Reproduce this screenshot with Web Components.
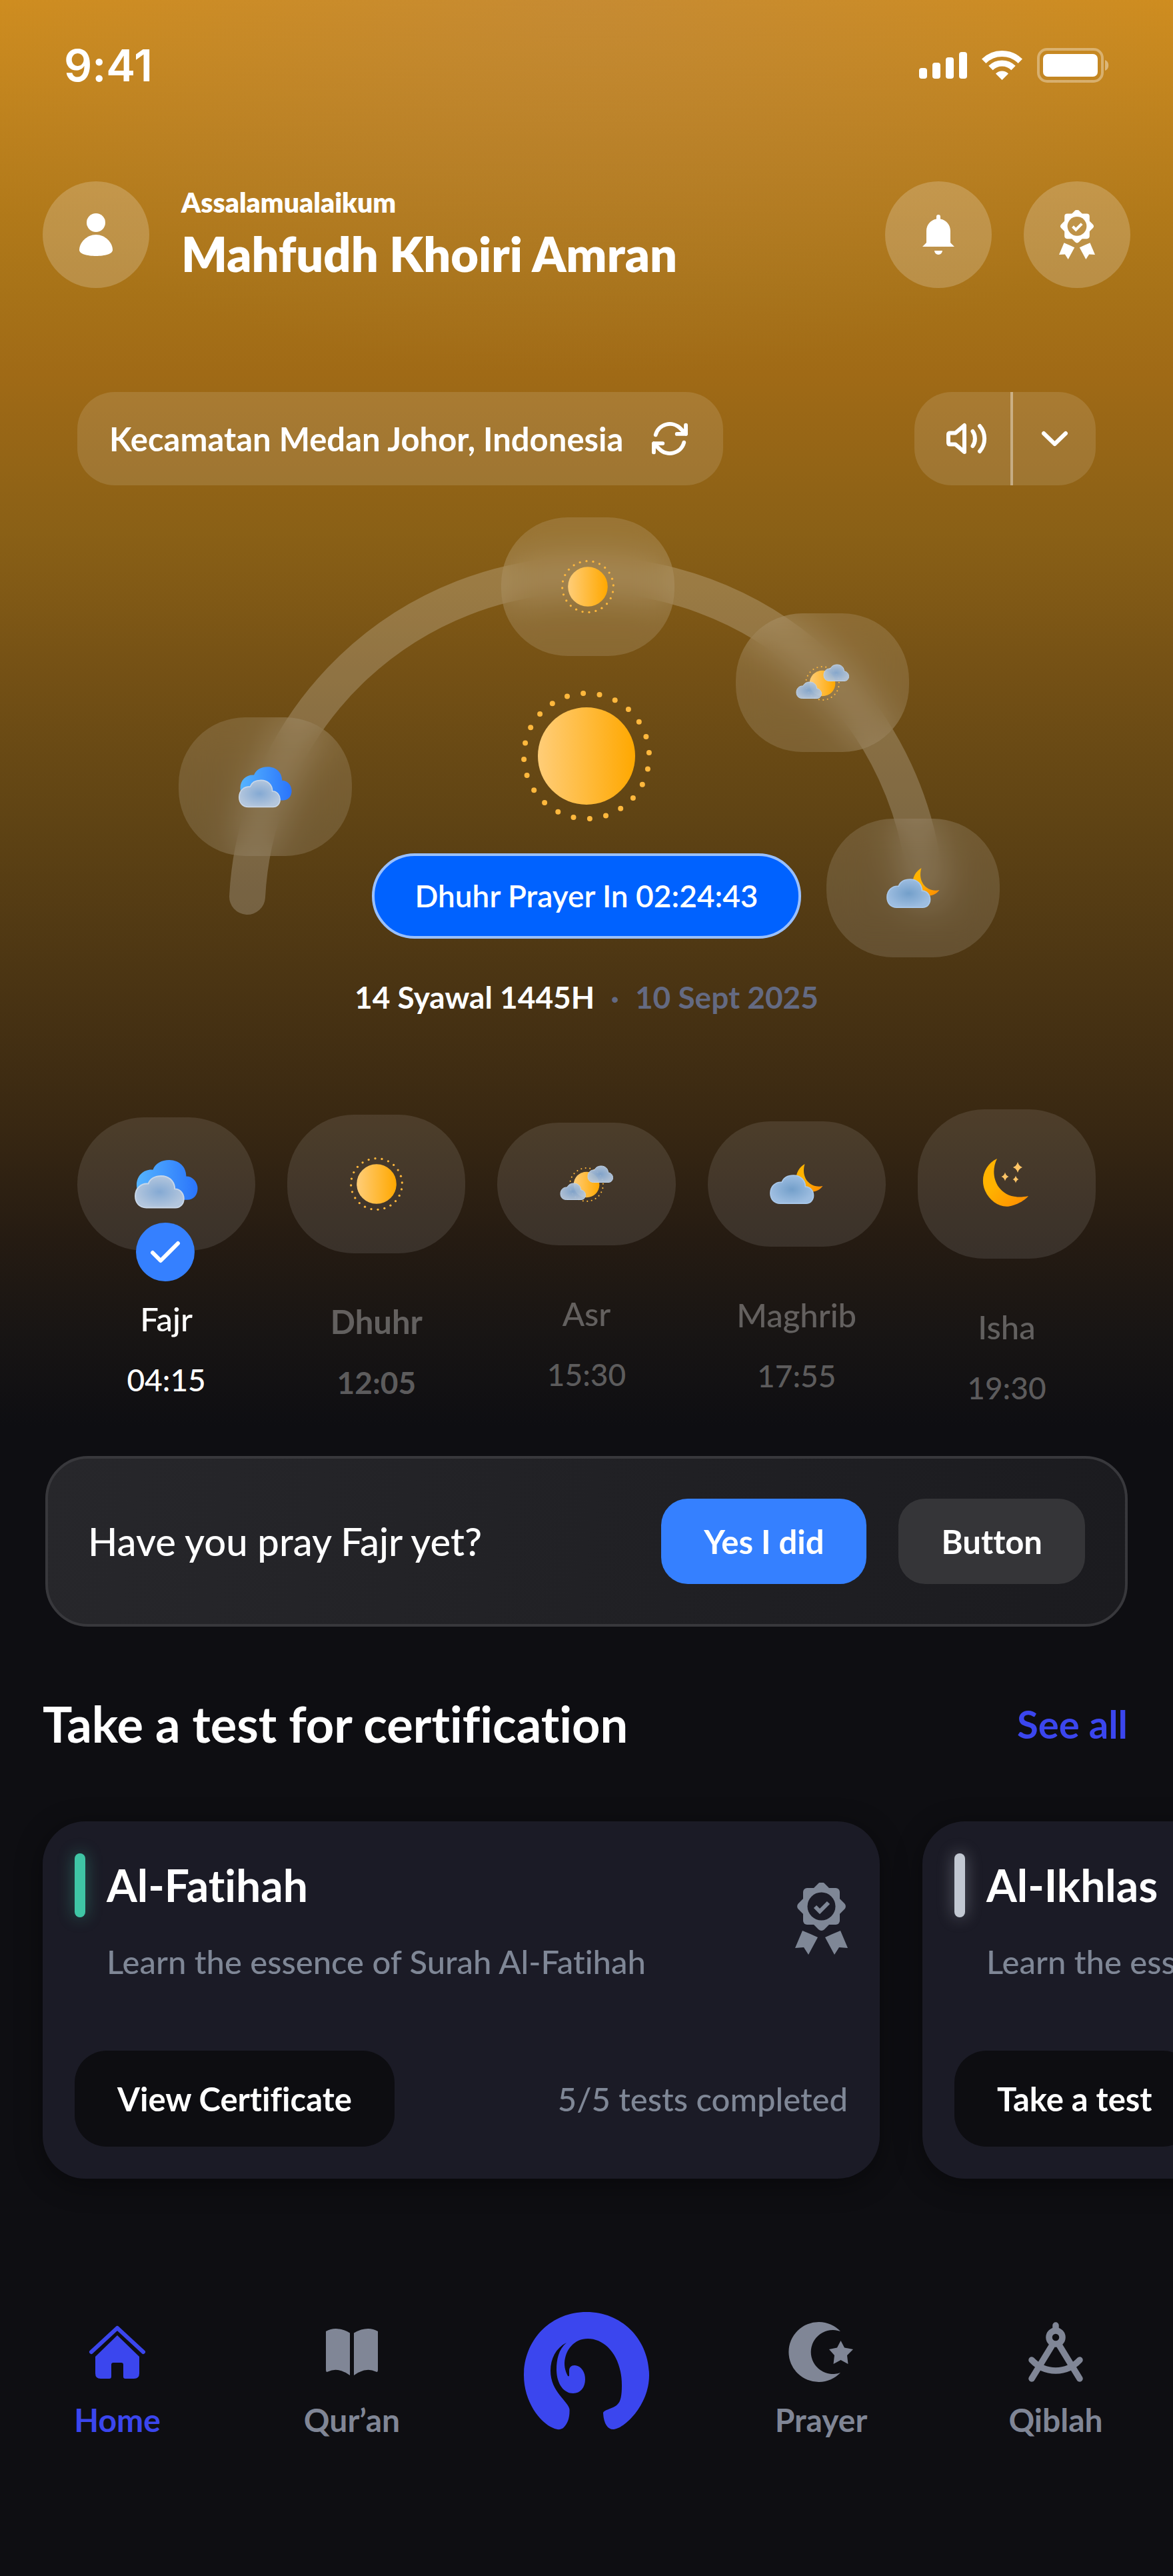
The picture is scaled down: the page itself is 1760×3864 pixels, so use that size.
<!DOCTYPE html>
<html lang="en">
<head>
<meta charset="utf-8">
<meta name="viewport" content="width=device-width, initial-scale=1">
<title>Prayer times</title>
<style>
  body {
    margin: 0;
    min-height: 100vh;
    overflow-x: hidden;
    background-color: #0e0e12;
    color: #fff;
    font-family: Lato, "Open Sans", sans-serif;
    font-size: 49px;
    line-height: 60px;
    font-variant-ligatures: none;
  }
</style>
</head>
<body>
<prayer-app></prayer-app>

<script>
const CLOUD = "M17 49C6 49 0 41 0 31C0 19 9 11 20 12C23 4 31 0 40 0C53 0 61 9 61 20C70 20 75 28 75 35C75 43 70 49 62 49z";

const GLASS = `
  <radialGradient id="glass">
    <stop offset="0" stop-color="#84a9d3"/>
    <stop offset="1" stop-color="#b3c6dd"/>
  </radialGradient>`;

const SUN_FILL = `
  <linearGradient id="sun">
    <stop offset="0" stop-color="#ffcd78"/>
    <stop offset="1" stop-color="#ffa800"/>
  </linearGradient>`;

const MOON_FILL = `
  <linearGradient id="moon" x1="0" y1="0" x2="1" y2="1">
    <stop offset=".4" stop-color="#ffb300"/>
    <stop offset="1" stop-color="#ff8a00"/>
  </linearGradient>`;

function sunShape() {
  let dots = "";
  for (let i = 0; i < 24; i++) {
    const a = (i * 15 - 93) * Math.PI / 180;
    dots += `<circle cx="${(94 * Math.cos(a)).toFixed(1)}" cy="${(94 * Math.sin(a)).toFixed(1)}" r="4"/>`;
  }
  return `<circle r="73" fill="url(#sun)"/><g fill="#ffb83d">${dots}</g>`;
}

function star(x, y, r) {
  const k = r / 4;
  return `<path fill="#ffc566" d="M${x} ${y - r - 1}Q${x + k} ${y - k} ${x + r} ${y}Q${x + k} ${y + k} ${x} ${y + r + 1}Q${x - k} ${y + k} ${x - r} ${y}Q${x - k} ${y - k} ${x} ${y - r - 1}z"/>`;
}

// name: [viewBox, markup]
const ICONS = {
  cloudy: ["0 0 95 72", `
    <defs>${GLASS}
      <linearGradient id="blue"><stop offset="0" stop-color="#55b4ff"/><stop offset="1" stop-color="#2a74fb"/></linearGradient>
    </defs>
    <path d="${CLOUD}" transform="translate(3 0) scale(1.22)" fill="url(#blue)"/>
    <path d="${CLOUD}" transform="translate(1 24) scale(.97)" fill="url(#glass)" stroke="#c9d7e8" stroke-width="2"/>`],
  sun: ["-98 -98 196 196", `<defs>${SUN_FILL}</defs>${sunShape()}`],
  "sun-cloud": ["0 0 80 56", `
    <defs>${GLASS}${SUN_FILL}</defs>
    <g transform="translate(40 29) scale(.265)">${sunShape()}</g>
    <path d="${CLOUD}" transform="translate(42 1) scale(.5)" fill="url(#glass)" fill-opacity=".94" stroke="#bdd3ec" stroke-width="2"/>
    <path d="${CLOUD}" transform="translate(1 27) scale(.5)" fill="url(#glass)" fill-opacity=".94" stroke="#bdd3ec" stroke-width="2"/>`],
  "moon-cloud": ["0 0 80 60", `
    <defs>${MOON_FILL}
      <radialGradient id="dusk"><stop offset="0" stop-color="#739fca"/><stop offset="1" stop-color="#9dbde0"/></radialGradient>
    </defs>
    <path d="M52.500 0C36 10 36 30 50 38C62 45 74 41 79.500 33C62 37 46 22 52.500 0z" fill="url(#moon)"/>
    <path d="${CLOUD}" transform="translate(1 17) scale(.86)" fill="url(#dusk)" stroke="#a9c8ea" stroke-width="2"/>`],
  "moon-stars": ["0 0 96 96", `
    <defs>${MOON_FILL}</defs>
    <path d="M34 10C16 18 8 40 16 58C24 76 42 86 58 80C68 77 76 72 81 66C62 70 46 66 36 52C28 40 27 24 34 10z" fill="url(#moon)"/>
    ${star(65, 23, 7)}${star(46, 37, 5.5)}${star(62, 41, 4.5)}`],
  person: ["0 0 50 64", `<circle cx="25" cy="14" r="14"/><path d="M25 32c14 0 25 12 25 23 0 6-12 9-25 9S0 61 0 55C0 44 11 32 25 32z"/>`],
  bell: ["0 0 48 60", `<path d="M24 0a3 3 0 0 1 3 3v3.500c9 1.500 15 9 15 18V42l6 6H0l6-6V24.500C6 15.500 12 8 21 6.500V3a3 3 0 0 1 3-3zM18 54h12a6 6 0 0 1-12 0z"/>`],
  award: ["0 0 79 108", `
    <mask id="hole"><rect width="79" height="108" fill="#fff"/><circle cx="39.500" cy="35.500" r="21" fill="#000"/></mask>
    <g mask="url(#hole)">
      <rect x="12" y="8" width="55" height="55" rx="6"/>
      <rect x="12" y="8" width="55" height="55" rx="6" transform="rotate(45 39.500 35.500)"/>
    </g>
    <path d="M30 36l7 7 13-13" fill="none" stroke="currentColor" stroke-width="6"/>
    <path d="M11 72l12 5 11 5-14 26-7-11-13 1zM68 72l-12 5-11 5 14 26 7-11 13 1z"/>`],
  refresh: ["0 0 24 24", `<path fill="none" stroke="currentColor" stroke-width="2.200" stroke-linecap="round" stroke-linejoin="round" d="M16.023 9.348h4.992v-.001M2.985 19.644v-4.992m0 0h4.992m-4.993 0 3.181 3.183a8.250 8.250 0 0 0 13.803-3.700M4.031 9.865a8.250 8.250 0 0 1 13.803-3.700l3.181 3.182m0-4.991v4.990"/>`],
  speaker: ["0 0 60 46", `<path fill="none" stroke="currentColor" stroke-width="6" stroke-linecap="round" stroke-linejoin="round" d="M3 17q0-2.500 2.500-2.500h8L27 3v40L13.500 31.500h-8Q3 31.500 3 29zM39.500 12c4.500 6 4.500 16 0 22M50 4c9.500 11 9.500 27 0 38"/>`],
  chevron: ["0 0 39 22", `<path fill="none" stroke="currentColor" stroke-width="6" stroke-linecap="round" stroke-linejoin="round" d="M3 3l16.500 16L36 3"/>`],
  check: ["0 0 44 32", `<path fill="none" stroke="currentColor" stroke-width="6" stroke-linecap="round" stroke-linejoin="round" d="M3 17l12 12L41 3"/>`],
  signal: ["0 0 72 40", `<rect y="24" width="12" height="16" rx="4"/><rect x="20" y="16" width="12" height="24" rx="4"/><rect x="40" y="8" width="12" height="32" rx="4"/><rect x="60" width="12" height="40" rx="4"/>`],
  wifi: ["0 0 61 44", `
    <path fill="none" stroke="currentColor" stroke-width="9" d="M3.200 15.700A38.600 38.600 0 0 1 57.800 15.700M13.500 26A24 24 0 0 1 47.500 26"/>
    <path d="M21 34.500a13.500 13.500 0 0 1 19 0L30.500 44z"/>`],
  battery: ["0 0 108 52", `
    <rect x="2" y="2" width="96" height="48" rx="13" fill="none" stroke="currentColor" stroke-width="4" opacity=".35"/>
    <rect x="9" y="9" width="82" height="34" rx="7"/>
    <path d="M102 18c7 2 7 14 0 16z" opacity=".4"/>`],
  home: ["0 0 84 79", `
    <path fill="none" stroke="currentColor" stroke-width="6" stroke-linecap="round" stroke-linejoin="round" d="M3 39L42 3l39 36"/>
    <path d="M42 14L75 46V71q0 8-8 8H54q-3 0-3-3V58q0-3-3-3H36q-3 0-3 3V76q0 3-3 3H17q-8 0-8-8V46z"/>`],
  book: ["0 0 78 70", `<path d="M0 4Q16-5 36 6.500V70Q18 57 3 64.500Q0 66 0 62zM78 4Q62-5 42 6.500V70Q60 57 75 64.500Q78 66 78 62z"/>`],
  crescent: ["0 0 96 90", `<path d="M77 14A45 45 0 1 0 77 76A33 33 0 1 1 77 14z"/><path d="M77.500 28l5.500 10.500L96 41l-9 9 1.500 13-11-6-11 6L68 50l-8-9 12-2.500z"/>`],
  compass: ["0 0 82 90", `
    <g fill="none" stroke="currentColor" stroke-width="9.500" stroke-linecap="round">
      <path d="M41 5v6M35 36L5 85M47 36l30 49M5 57Q20 73 41 73T77 57"/>
      <circle cx="41" cy="23" r="10"/>
    </g>`],
  logo: ["0 0 188 176", `<path d="M94 0C40 0 0 42 0 95C0 134 24 166 44 174C50 177 56 177 60 173C66 167 69 158 68.500 146C67 134 40 120 40 88C40 70 48 54 64 46C52 56 49 72 49 86C49 108 60 122 74 122C85 122 92 113 92 101C92 88 84 80 76 80C71 80 68 83 68 88V95C68 97 66 97 65 94C62 88 61 82 61 77C62 56 76 40 96 40C122 40 147 66 147 110C147 126 145 134 141 138C134 146 119 146 119 152C120 168 126 176 134 176C150 176 188 140 188 95C188 42 148 0 94 0z"/>`]
};

class BaseElement extends HTMLElement {
  constructor() {
    super();
    this.shadow = this.attachShadow({ mode: "open" });
  }

  connectedCallback() {
    this.shadow.innerHTML = `
      <style>
        :host { display: block; box-sizing: border-box; }
        * { box-sizing: border-box; }
        button { font: inherit; color: inherit; border: 0; margin: 0; padding: 0; background: none; cursor: pointer; }
        h1, h2, h3, p { margin: 0; font-weight: inherit; font-size: inherit; }
        a { color: inherit; text-decoration: none; }
        ${this.renderStyle()}
      </style>
      ${this.renderHTML()}
    `;
  }

  renderStyle() {
    return "";
  }
}

// <app-icon name="bell" width="48">
customElements.define("app-icon", class extends BaseElement {
  renderStyle() {
    return `
      :host { flex: none; }
      svg { display: block; fill: currentColor; overflow: visible; }
    `;
  }

  renderHTML() {
    const [box, markup] = ICONS[this.getAttribute("name")];
    const size = box.split(" ");
    const width = Number(this.getAttribute("width") || size[2]);
    const height = Math.round(width * size[3] / size[2]);
    return `<svg viewBox="${box}" width="${width}" height="${height}" aria-hidden="true">${markup}</svg>`;
  }
});

customElements.define("status-bar", class extends BaseElement {
  renderStyle() {
    return `
      :host {
        display: flex;
        align-items: center;
        justify-content: space-between;
        height: 196px;
        padding: 0 96px;
      }
      time { font-family: Inter, sans-serif; font-size: 66px; font-weight: 600; }
      div { display: flex; align-items: center; gap: 22px; }
    `;
  }

  renderHTML() {
    return `
      <time>9:41</time>
      <div>
        <app-icon name="signal"></app-icon>
        <app-icon name="wifi"></app-icon>
        <app-icon name="battery"></app-icon>
      </div>
    `;
  }
});

customElements.define("round-button", class extends BaseElement {
  renderStyle() {
    return `
      :host { flex: none; }
      button {
        display: flex;
        align-items: center;
        justify-content: center;
        width: 160px;
        height: 160px;
        border-radius: 50%;
        background-color: rgba(255, 255, 255, .2);
      }
    `;
  }

  renderHTML() {
    return `<button aria-label="${this.getAttribute("label")}"><slot></slot></button>`;
  }
});

customElements.define("app-header", class extends BaseElement {
  renderStyle() {
    return `
      :host {
        display: flex;
        align-items: center;
        gap: 48px;
        padding: 76px 64px 0;
      }
      div { flex: 1; }
      p { font-size: 41px; line-height: 48px; font-weight: 800; }
      h1 { margin-top: 8px; font-size: 72px; line-height: 88px; font-weight: 800; }
    `;
  }

  renderHTML() {
    return `
      <round-button label="Profile"><app-icon name="person"></app-icon></round-button>
      <div>
        <p>Assalamualaikum</p>
        <h1>Mahfudh Khoiri Amran</h1>
      </div>
      <round-button label="Notifications"><app-icon name="bell"></app-icon></round-button>
      <round-button label="Certificates"><app-icon name="award" width="54"></app-icon></round-button>
    `;
  }
});

customElements.define("location-bar", class extends BaseElement {
  renderStyle() {
    return `
      :host {
        display: flex;
        justify-content: space-between;
        padding: 156px 116px 0;
      }
      .pill {
        display: flex;
        align-items: center;
        height: 140px;
        border-radius: 56px;
        background-color: rgba(255, 255, 255, .12);
      }
      .place { gap: 38px; padding: 0 48px; font-weight: 700; }
      .sound { align-items: stretch; }
      .sound button {
        display: flex;
        align-items: center;
        justify-content: center;
        width: 124px;
      }
      .sound button:first-child {
        width: 148px;
        padding-left: 12px;
        border-right: 4px solid rgba(255, 255, 255, .4);
      }
    `;
  }

  renderHTML() {
    return `
      <button class="pill place">Kecamatan Medan Johor, Indonesia <app-icon name="refresh" width="64"></app-icon></button>
      <div class="pill sound">
        <button aria-label="Sound"><app-icon name="speaker"></app-icon></button>
        <button aria-label="Sound options"><app-icon name="chevron"></app-icon></button>
      </div>
    `;
  }
});

customElements.define("sun-arc", class extends BaseElement {
  renderStyle() {
    return `
      :host { padding-top: 48px; font-size: 46px; }
      .sky {
        position: relative;
        display: flex;
        flex-direction: column;
        align-items: center;
        gap: 48px;
        width: 1240px;
        height: 660px;
        margin: 0 auto;
        padding-top: 260px;
      }
      .track { position: absolute; left: 0; top: 0; overflow: visible; }
      .pin {
        position: absolute;
        display: flex;
        align-items: center;
        justify-content: center;
        width: 260px;
        height: 208px;
        border-radius: 100px;
        background-color: rgba(255, 255, 255, .13);
        backdrop-filter: blur(28px);
      }
      .fajr { left: 8px; top: 300px; }
      .dhuhr { left: 492px; top: 0; }
      .asr { left: 844px; top: 144px; }
      .maghrib { left: 980px; top: 452px; }
      .next {
        height: 128px;
        padding: 0 60px;
        border: 4px solid #99c0ff;
        border-radius: 64px;
        background-color: #0062ff;
        font-weight: 600;
      }
      p {
        display: flex;
        justify-content: center;
        gap: 24px;
        margin-top: 30px;
        font-weight: 700;
      }
      .muted { color: #646a82; }
    `;
  }

  renderHTML() {
    return `
      <div class="sky">
        <svg class="track" width="1240" height="660" aria-hidden="true">
          <path d="M111 569A510 510 0 0 1 1129 560" fill="none" stroke="#fff" stroke-opacity=".2" stroke-width="54" stroke-linecap="round"/>
        </svg>
        <span class="pin fajr"><app-icon name="cloudy" width="80"></app-icon></span>
        <span class="pin dhuhr"><app-icon name="sun" width="80"></app-icon></span>
        <span class="pin asr"><app-icon name="sun-cloud"></app-icon></span>
        <span class="pin maghrib"><app-icon name="moon-cloud"></app-icon></span>
        <app-icon name="sun"></app-icon>
        <button class="next">Dhuhr Prayer In 02:24:43</button>
      </div>
      <p><span>14 Syawal 1445H</span><span class="muted">·</span><span class="muted">10 Sept 2025</span></p>
    `;
  }
});

// <prayer-time icon="sun" size="80" name="Dhuhr" time="12:05">
customElements.define("prayer-time", class extends BaseElement {
  renderStyle() {
    return `
      :host {
        flex: 1;
        display: flex;
        flex-direction: column;
        align-items: center;
        color: rgba(255, 255, 255, .32);
        font-weight: 500;
      }
      :host([done]) { color: #fff; }
      :host([next]) { font-weight: 700; }
      .pill {
        position: relative;
        display: flex;
        justify-content: center;
        align-self: stretch;
        padding: 64px 0;
        border-radius: 100px;
        background-color: rgba(255, 255, 255, .1);
      }
      .badge {
        position: absolute;
        left: calc(50% - 46px);
        bottom: -46px;
        display: flex;
        align-items: center;
        justify-content: center;
        width: 88px;
        height: 88px;
        border-radius: 50%;
        background-color: #3580ff;
        color: #fff;
      }
      h3 { margin-top: 72px; }
      time { margin-top: 32px; font-size: 46px; }
    `;
  }

  renderHTML() {
    const badge = this.hasAttribute("done") ? `<span class="badge"><app-icon name="check"></app-icon></span>` : "";
    return `
      <div class="pill"><app-icon name="${this.getAttribute("icon")}" width="${this.getAttribute("size")}"></app-icon>${badge}</div>
      <h3>${this.getAttribute("name")}</h3>
      <time>${this.getAttribute("time")}</time>
    `;
  }
});

customElements.define("prayer-list", class extends BaseElement {
  renderStyle() {
    return `
      :host {
        display: flex;
        align-items: center;
        gap: 48px;
        padding: 138px 116px 0;
      }
    `;
  }

  renderHTML() {
    return "<slot></slot>";
  }
});

customElements.define("ask-card", class extends BaseElement {
  renderStyle() {
    return `
      :host {
        display: flex;
        align-items: center;
        gap: 48px;
        height: 256px;
        margin: 72px 68px 0;
        padding: 0 60px;
        border: 4px solid #38383c;
        border-radius: 64px;
        background: linear-gradient(100deg, #27272b, #1b1b1f);
      }
      h2 { flex: 1; font-size: 58px; line-height: 72px; font-weight: 500; }
      button {
        height: 128px;
        padding: 0 64px;
        border-radius: 40px;
        background-color: #353538;
        font-weight: 700;
      }
      .yes { background-color: #3580ff; }
    `;
  }

  renderHTML() {
    return `
      <h2><slot></slot></h2>
      <button class="yes">Yes I did</button>
      <button>Button</button>
    `;
  }
});

customElements.define("section-head", class extends BaseElement {
  renderStyle() {
    return `
      :host {
        display: flex;
        align-items: center;
        justify-content: space-between;
        padding: 102px 68px 0 64px;
      }
      h2 { font-size: 74px; line-height: 88px; font-weight: 700; }
      a { color: #3b46ee; font-size: 58px; line-height: 72px; font-weight: 700; }
    `;
  }

  renderHTML() {
    return `<h2><slot></slot></h2><a href="#tests">See all</a>`;
  }
});

// <test-card name="" text="" action="" note="" tone="">
customElements.define("test-card", class extends BaseElement {
  renderStyle() {
    const tone = this.getAttribute("tone");
    return `
      :host {
        flex: none;
        width: 1256px;
        padding: 48px;
        border-radius: 64px;
        background-color: #1b1b26;
        box-shadow: 0 8px 40px rgba(0, 0, 0, .4);
        color: #7f8796;
        font-weight: 500;
      }
      .top { display: flex; align-items: flex-start; justify-content: space-between; }
      .name { display: flex; align-items: center; gap: 32px; }
      .name i {
        width: 16px;
        height: 96px;
        border-radius: 8px;
        background-color: ${tone};
        box-shadow: 0 0 24px ${tone}66;
      }
      h3 { color: #fff; font-size: 66px; line-height: 80px; font-weight: 700; }
      p { margin: 36px 0 0 48px; }
      ::slotted(app-icon) { margin-top: 44px; }
      .bottom {
        display: flex;
        align-items: center;
        justify-content: space-between;
        margin-top: 104px;
      }
      button {
        height: 144px;
        padding: 0 64px;
        border-radius: 48px;
        background-color: #0d0d11;
        color: #fff;
        font-weight: 700;
      }
    `;
  }

  renderHTML() {
    return `
      <div class="top">
        <div>
          <div class="name"><i></i><h3>${this.getAttribute("name")}</h3></div>
          <p>${this.getAttribute("text")}</p>
        </div>
        <slot></slot>
      </div>
      <div class="bottom">
        <button>${this.getAttribute("action")}</button>
        <span>${this.getAttribute("note") || ""}</span>
      </div>
    `;
  }
});

customElements.define("card-row", class extends BaseElement {
  renderStyle() {
    return `
      :host {
        display: flex;
        gap: 64px;
        margin-top: 54px;
        padding: 48px 64px 80px;
        overflow: hidden;
      }
    `;
  }

  renderHTML() {
    return "<slot></slot>";
  }
});

customElements.define("tab-item", class extends BaseElement {
  renderStyle() {
    return `
      :host { flex: 1; padding-top: 14px; color: #808696; font-size: 48px; font-weight: 700; }
      :host([active]) { color: #3b46ee; }
      a {
        display: flex;
        flex-direction: column;
        align-items: center;
        gap: 26px;
      }
      .icon {
        display: flex;
        align-items: center;
        height: 92px;
      }
    `;
  }

  renderHTML() {
    return `
      <a href="#${this.getAttribute("icon")}">
        <span class="icon"><app-icon name="${this.getAttribute("icon")}"></app-icon></span>
        <slot></slot>
      </a>
    `;
  }
});

customElements.define("tab-bar", class extends BaseElement {
  renderStyle() {
    return `
      nav { display: flex; align-items: flex-start; padding-top: 120px; }
      .logo { flex: 1; display: flex; justify-content: center; color: #3b46ee; }
    `;
  }

  renderHTML() {
    return `
      <nav>
        <tab-item icon="home" active>Home</tab-item>
        <tab-item icon="book">Qur’an</tab-item>
        <a class="logo" href="#start" aria-label="Start"><app-icon name="logo"></app-icon></a>
        <tab-item icon="crescent">Prayer</tab-item>
        <tab-item icon="compass">Qiblah</tab-item>
      </nav>
    `;
  }
});

customElements.define("prayer-app", class extends BaseElement {
  renderStyle() {
    return `
      :host {
        background:
          radial-gradient(ellipse 60% 560px at 50% 0, rgba(184, 136, 84, .4), rgba(160, 110, 70, 0)) no-repeat,
          linear-gradient(#d08d1c 0, #ba7f1b 220px, #a87318 430px, #a06a16 560px, #8a6016 800px,
            #755115 1000px, #604414 1220px, #4a3413 1480px, #392812 1680px, #251b12 1860px,
            #181514 2000px, #0e0e12 2140px) no-repeat;
      }
    `;
  }

  renderHTML() {
    return `
      <status-bar></status-bar>
      <app-header></app-header>
      <location-bar></location-bar>
      <sun-arc></sun-arc>
      <prayer-list>
        <prayer-time icon="cloudy" size="95" name="Fajr" time="04:15" done></prayer-time>
        <prayer-time icon="sun" size="80" name="Dhuhr" time="12:05" next></prayer-time>
        <prayer-time icon="sun-cloud" size="80" name="Asr" time="15:30"></prayer-time>
        <prayer-time icon="moon-cloud" size="80" name="Maghrib" time="17:55"></prayer-time>
        <prayer-time icon="moon-stars" size="96" name="Isha" time="19:30"></prayer-time>
      </prayer-list>
      <ask-card>Have you pray Fajr yet?</ask-card>
      <section-head>Take a test for certification</section-head>
      <card-row>
        <test-card name="Al-Fatihah" text="Learn the essence of Surah Al-Fatihah" action="View Certificate" note="5/5 tests completed" tone="#3fc5a5">
          <app-icon name="award"></app-icon>
        </test-card>
        <test-card name="Al-Ikhlas" text="Learn the essence of Surah Al-Ikhlas" action="Take a test" tone="#c2c8d2"></test-card>
      </card-row>
      <tab-bar></tab-bar>
    `;
  }
});
</script>
</body>
</html>
